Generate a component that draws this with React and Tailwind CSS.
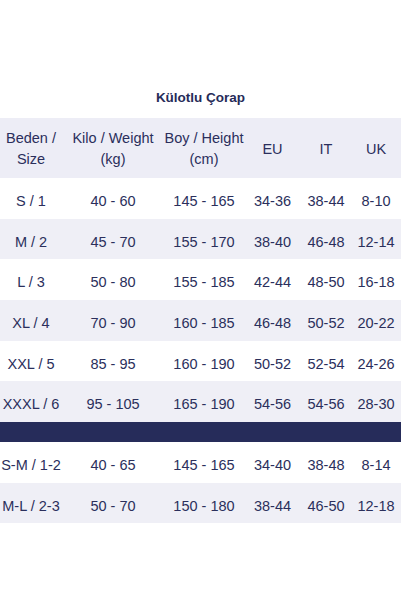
import React from "react";

const cols = "grid grid-cols-[62px_102px_80px_57px_50px_50px]";

const rows = [
  ["S / 1", "40 - 60", "145 - 165", "34-36", "38-44", "8-10"],
  ["M / 2", "45 - 70", "155 - 170", "38-40", "46-48", "12-14"],
  ["L / 3", "50 - 80", "155 - 185", "42-44", "48-50", "16-18"],
  ["XL / 4", "70 - 90", "160 - 185", "46-48", "50-52", "20-22"],
  ["XXL / 5", "85 - 95", "160 - 190", "50-52", "52-54", "24-26"],
  ["XXXL / 6", "95 - 105", "165 - 190", "54-56", "54-56", "28-30"],
];

const extra = [
  ["S-M / 1-2", "40 - 65", "145 - 165", "34-40", "38-48", "8-14"],
  ["M-L / 2-3", "50 - 70", "150 - 180", "38-44", "46-50", "12-18"],
];

const Row = ({ cells, shaded }) => (
  <div className={`${cols} h-[40.67px] ${shaded ? "bg-[#efeff6]" : "bg-white"}`}>
    {cells.map((c, i) => (
      <div key={i} className="flex items-center justify-center whitespace-nowrap pt-[7px]">
        {c}
      </div>
    ))}
  </div>
);

export default function App() {
  return (
    <div
      className="w-[401px] h-[601px] bg-white text-[#2b2f5c] text-[14.5px]"
      style={{ fontFamily: '"Liberation Sans", Arial, sans-serif' }}
    >
      <div className="h-[118px] flex items-end justify-center pb-[10px]">
        <h1 className="text-[13.5px] font-bold leading-[20px] text-[#262b58]">Külotlu Çorap</h1>
      </div>

      {/* header */}
      <div className={`${cols} h-[60px] bg-[#ededf6] leading-[21px] text-center pt-[2px]`}>
        <div className="flex items-center justify-center">Beden /<br />Size</div>
        <div className="flex items-center justify-center">Kilo / Weight<br />(kg)</div>
        <div className="flex items-center justify-center">Boy / Height<br />(cm)</div>
        <div className="flex items-center justify-center">EU</div>
        <div className="flex items-center justify-center">IT</div>
        <div className="flex items-center justify-center">UK</div>
      </div>

      {rows.map((r, i) => (
        <Row key={i} cells={r} shaded={i % 2 === 1} />
      ))}

      <div className="h-[20px] bg-[#262c5a]" />

      {extra.map((r, i) => (
        <Row key={i} cells={r} shaded={i % 2 === 1} />
      ))}
    </div>
  );
}
